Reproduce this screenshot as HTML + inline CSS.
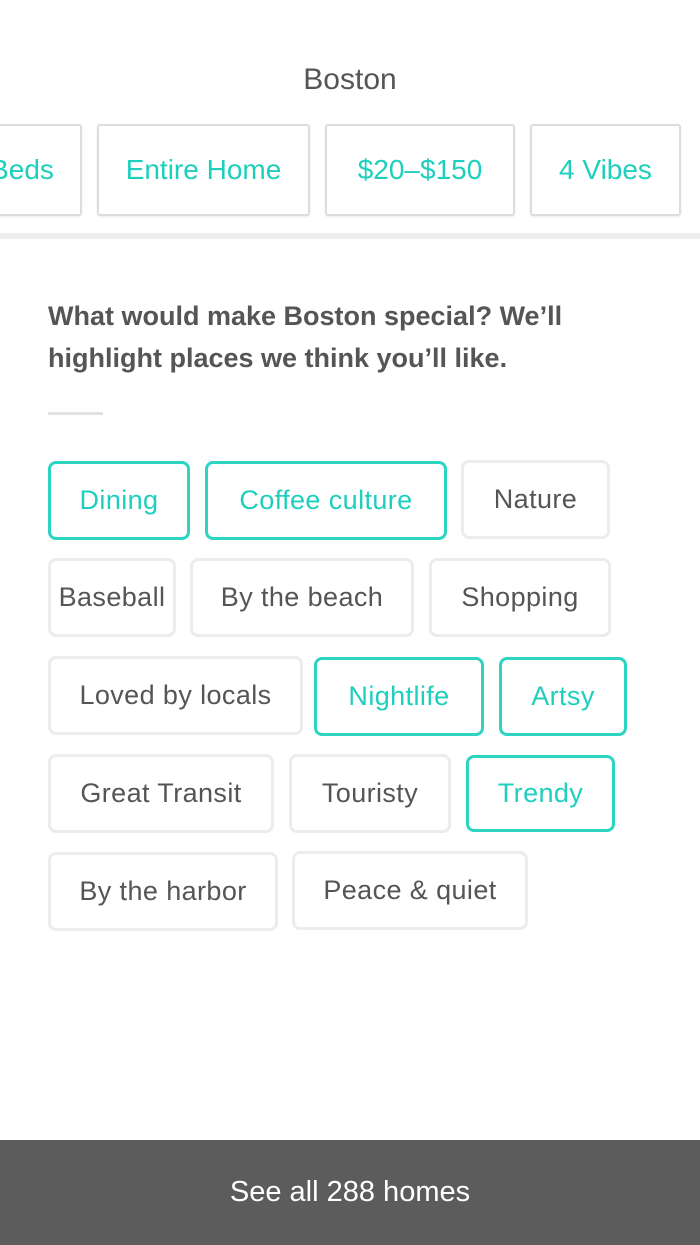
<!DOCTYPE html>
<html><head><meta charset="utf-8"><style>
body{margin:0;width:700px;height:1245px;position:relative;background:#fff;font-family:"Liberation Sans",sans-serif;overflow:hidden}
.a{position:absolute;box-sizing:border-box;display:flex;align-items:center;justify-content:center;white-space:nowrap}
.t{border:2px solid #ddd;border-radius:3px;color:#1fcfbd;font-size:28px;height:92px;top:124px;box-shadow:0 1px 2px rgba(0,0,0,.08)}
.c{border:3px solid #ececec;border-radius:8px;color:#555;font-size:27px;letter-spacing:0.4px;height:79px}
.s{border-color:#2dd4c2;color:#1fcfbd}
</style></head><body>
<div class="a" style="left:0;width:700px;top:58px;height:44px;font-size:30px;color:#555">Boston</div>
<div class="a t" style="left:-60px;width:142px;padding-left:22px">Beds</div>
<div class="a t" style="left:97px;width:213px">Entire Home</div>
<div class="a t" style="left:325px;width:190px">$20–$150</div>
<div class="a t" style="left:530px;width:151px">4 Vibes</div>
<div style="position:absolute;left:0;top:233px;width:700px;height:6px;background:#eee"></div>
<div style="position:absolute;left:48px;top:295px;width:540px;font-size:27px;font-weight:bold;color:#555;line-height:42px">What would make Boston special? We’ll highlight places we think you’ll like.</div>
<div style="position:absolute;left:48px;top:412px;width:55px;height:3px;background:#e2e2e2"></div>
<div class="a c s" style="left:48px;top:461px;width:142px">Dining</div>
<div class="a c s" style="left:205px;top:461px;width:242px">Coffee culture</div>
<div class="a c" style="left:461px;top:460px;width:149px">Nature</div>
<div class="a c" style="left:48px;top:558px;width:128px">Baseball</div>
<div class="a c" style="left:190px;top:558px;width:224px">By the beach</div>
<div class="a c" style="left:429px;top:558px;width:182px">Shopping</div>
<div class="a c" style="left:48px;top:656px;width:255px">Loved by locals</div>
<div class="a c s" style="left:314px;top:657px;width:170px">Nightlife</div>
<div class="a c s" style="left:499px;top:657px;width:128px">Artsy</div>
<div class="a c" style="left:48px;top:754px;width:226px">Great Transit</div>
<div class="a c" style="left:289px;top:754px;width:162px">Touristy</div>
<div class="a c s" style="left:466px;top:755px;width:149px;height:77px">Trendy</div>
<div class="a c" style="left:48px;top:852px;width:230px">By the harbor</div>
<div class="a c" style="left:292px;top:851px;width:236px">Peace &amp; quiet</div>
<div class="a" style="left:0;top:1140px;width:700px;height:105px;background:#5c5c5c;color:#fff;font-size:29px">See all 288 homes</div>
</body></html>
